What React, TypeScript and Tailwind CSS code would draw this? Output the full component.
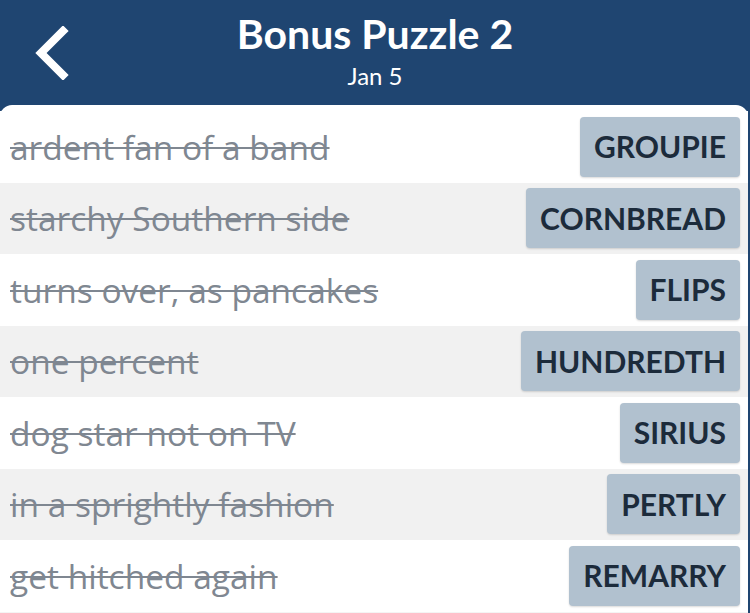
import React from "react";

const rows: [string, string][] = [
  ["ardent fan of a band", "GROUPIE"],
  ["starchy Southern side", "CORNBREAD"],
  ["turns over, as pancakes", "FLIPS"],
  ["one percent", "HUNDREDTH"],
  ["dog star not on TV", "SIRIUS"],
  ["in a sprightly fashion", "PERTLY"],
  ["get hitched again", "REMARRY"],
];

export default function App() {
  return (
    <div className="w-[750px] h-[613px] overflow-hidden bg-[#1f4571] flex flex-col" style={{ fontFamily: "Lato, 'Open Sans', sans-serif" }}>
      <div className="relative h-[105px] flex flex-col items-center text-white shrink-0">
        <svg className="absolute left-[31px] top-[26px]" width="40" height="54" viewBox="0 0 40 54">
          <path d="M32 5 L10 27 L32 49" fill="none" stroke="white" strokeWidth="8" strokeLinecap="square" />
        </svg>
        <div className="mt-[9px] text-[41px] font-bold leading-[50px]">Bonus Puzzle 2</div>
        <div className="text-[24px] leading-[28px] mt-[3px]">Jan 5</div>
      </div>
      <div className="flex-1 bg-white rounded-t-[12px] w-[748px] pt-[6px] flex flex-col">
        {rows.map(([clue, ans], i) => (
          <div
            key={i}
            className={`h-[71.5px] shrink-0 flex items-center justify-between pl-[10px] pr-[8px] ${i % 2 === 1 ? "bg-[#f1f1f1]" : "bg-white"}`}
          >
            <span className="text-[33.5px] text-[#7f8791] line-through decoration-[2px]" style={{ fontFamily: "'Open Sans', sans-serif" }}>{clue}</span>
            <span className="h-[60px] flex items-center px-[14px] rounded-[4px] bg-[#b1c1cf] text-[#1c2b3b] text-[30px] font-bold shadow-[0_1px_2px_rgba(0,0,0,0.15)]">
              {ans}
            </span>
          </div>
        ))}
        <div className="flex-1 bg-[#f4f4f4]" />
      </div>
    </div>
  );
}
